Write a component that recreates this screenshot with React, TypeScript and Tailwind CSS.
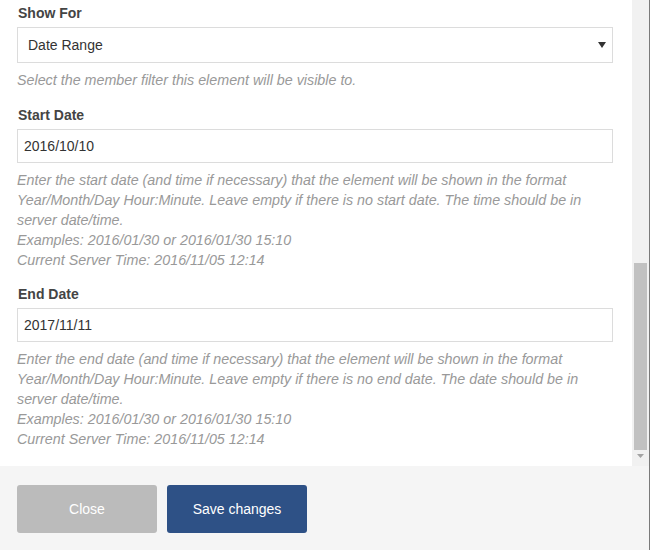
import React from "react";

const help = "text-[14.3px] leading-[20px] italic text-[#999999] whitespace-nowrap";
const label = "text-[14px] leading-[20px] font-bold text-[#444444] pl-[1px]";

export default function App() {
  return (
    <div
      className="w-[650px] h-[550px] flex flex-col bg-white border-r border-[#7a7a7a]"
      style={{ fontFamily: '"Liberation Sans", Arial, sans-serif' }}
    >
      <div className="flex h-[466px]">
        <div className="flex-1 pl-[17px] pr-[19px] pt-[3px]">
          <div className={label}>Show For</div>
          <div className="mt-[4px] h-[36px] border border-[#dcdcdc] flex items-center justify-between pl-[10px] pr-[6px] text-[14px] text-[#333333]">
            <span>Date Range</span>
            <svg width="8" height="6" viewBox="0 0 8 6">
              <path d="M0 0H8L4 6Z" fill="#333333" />
            </svg>
          </div>
          <div className={`${help} mt-[7px]`}>
            Select the member filter this element will be visible to.
          </div>

          <div className={`${label} mt-[15px]`}>Start Date</div>
          <div className="mt-[4px] h-[34px] border border-[#dcdcdc] flex items-center pl-[6px] text-[14px] text-[#333333]">
            2016/10/10
          </div>
          <div className={`${help} mt-[7px]`}>
            Enter the start date (and time if necessary) that the element will be shown in the format
            <br />
            Year/Month/Day Hour:Minute. Leave empty if there is no start date. The time should be in
            <br />
            server date/time.
            <br />
            Examples: 2016/01/30 or 2016/01/30 15:10
            <br />
            Current Server Time: 2016/11/05 12:14
          </div>

          <div className={`${label} mt-[14px]`}>End Date</div>
          <div className="mt-[4px] h-[34px] border border-[#dcdcdc] flex items-center pl-[6px] text-[14px] text-[#333333]">
            2017/11/11
          </div>
          <div className={`${help} mt-[7px]`}>
            Enter the end date (and time if necessary) that the element will be shown in the format
            <br />
            Year/Month/Day Hour:Minute. Leave empty if there is no end date. The date should be in
            <br />
            server date/time.
            <br />
            Examples: 2016/01/30 or 2016/01/30 15:10
            <br />
            Current Server Time: 2016/11/05 12:14
          </div>
        </div>
        <div className="w-[17px] bg-[#f1f1f1] flex flex-col pt-[263px] pb-[4px] px-[1px]">
          <div className="h-[187px] bg-[#c1c1c1] mx-[1px]" />
          <div className="flex-1 flex items-center justify-center">
            <svg width="7" height="4" viewBox="0 0 7 4">
              <path d="M0 0H7L3.5 4Z" fill="#a3a3a3" />
            </svg>
          </div>
        </div>
      </div>
      <div className="flex-1 bg-[#f5f5f5] flex gap-[10px] pl-[17px] pt-[19px]">
        <button className="w-[140px] h-[48px] rounded-[3px] bg-[#bbbbbb] text-white text-[14px]">
          Close
        </button>
        <button className="w-[140px] h-[48px] rounded-[3px] bg-[#2e5186] text-white text-[14px]">
          Save changes
        </button>
      </div>
    </div>
  );
}
